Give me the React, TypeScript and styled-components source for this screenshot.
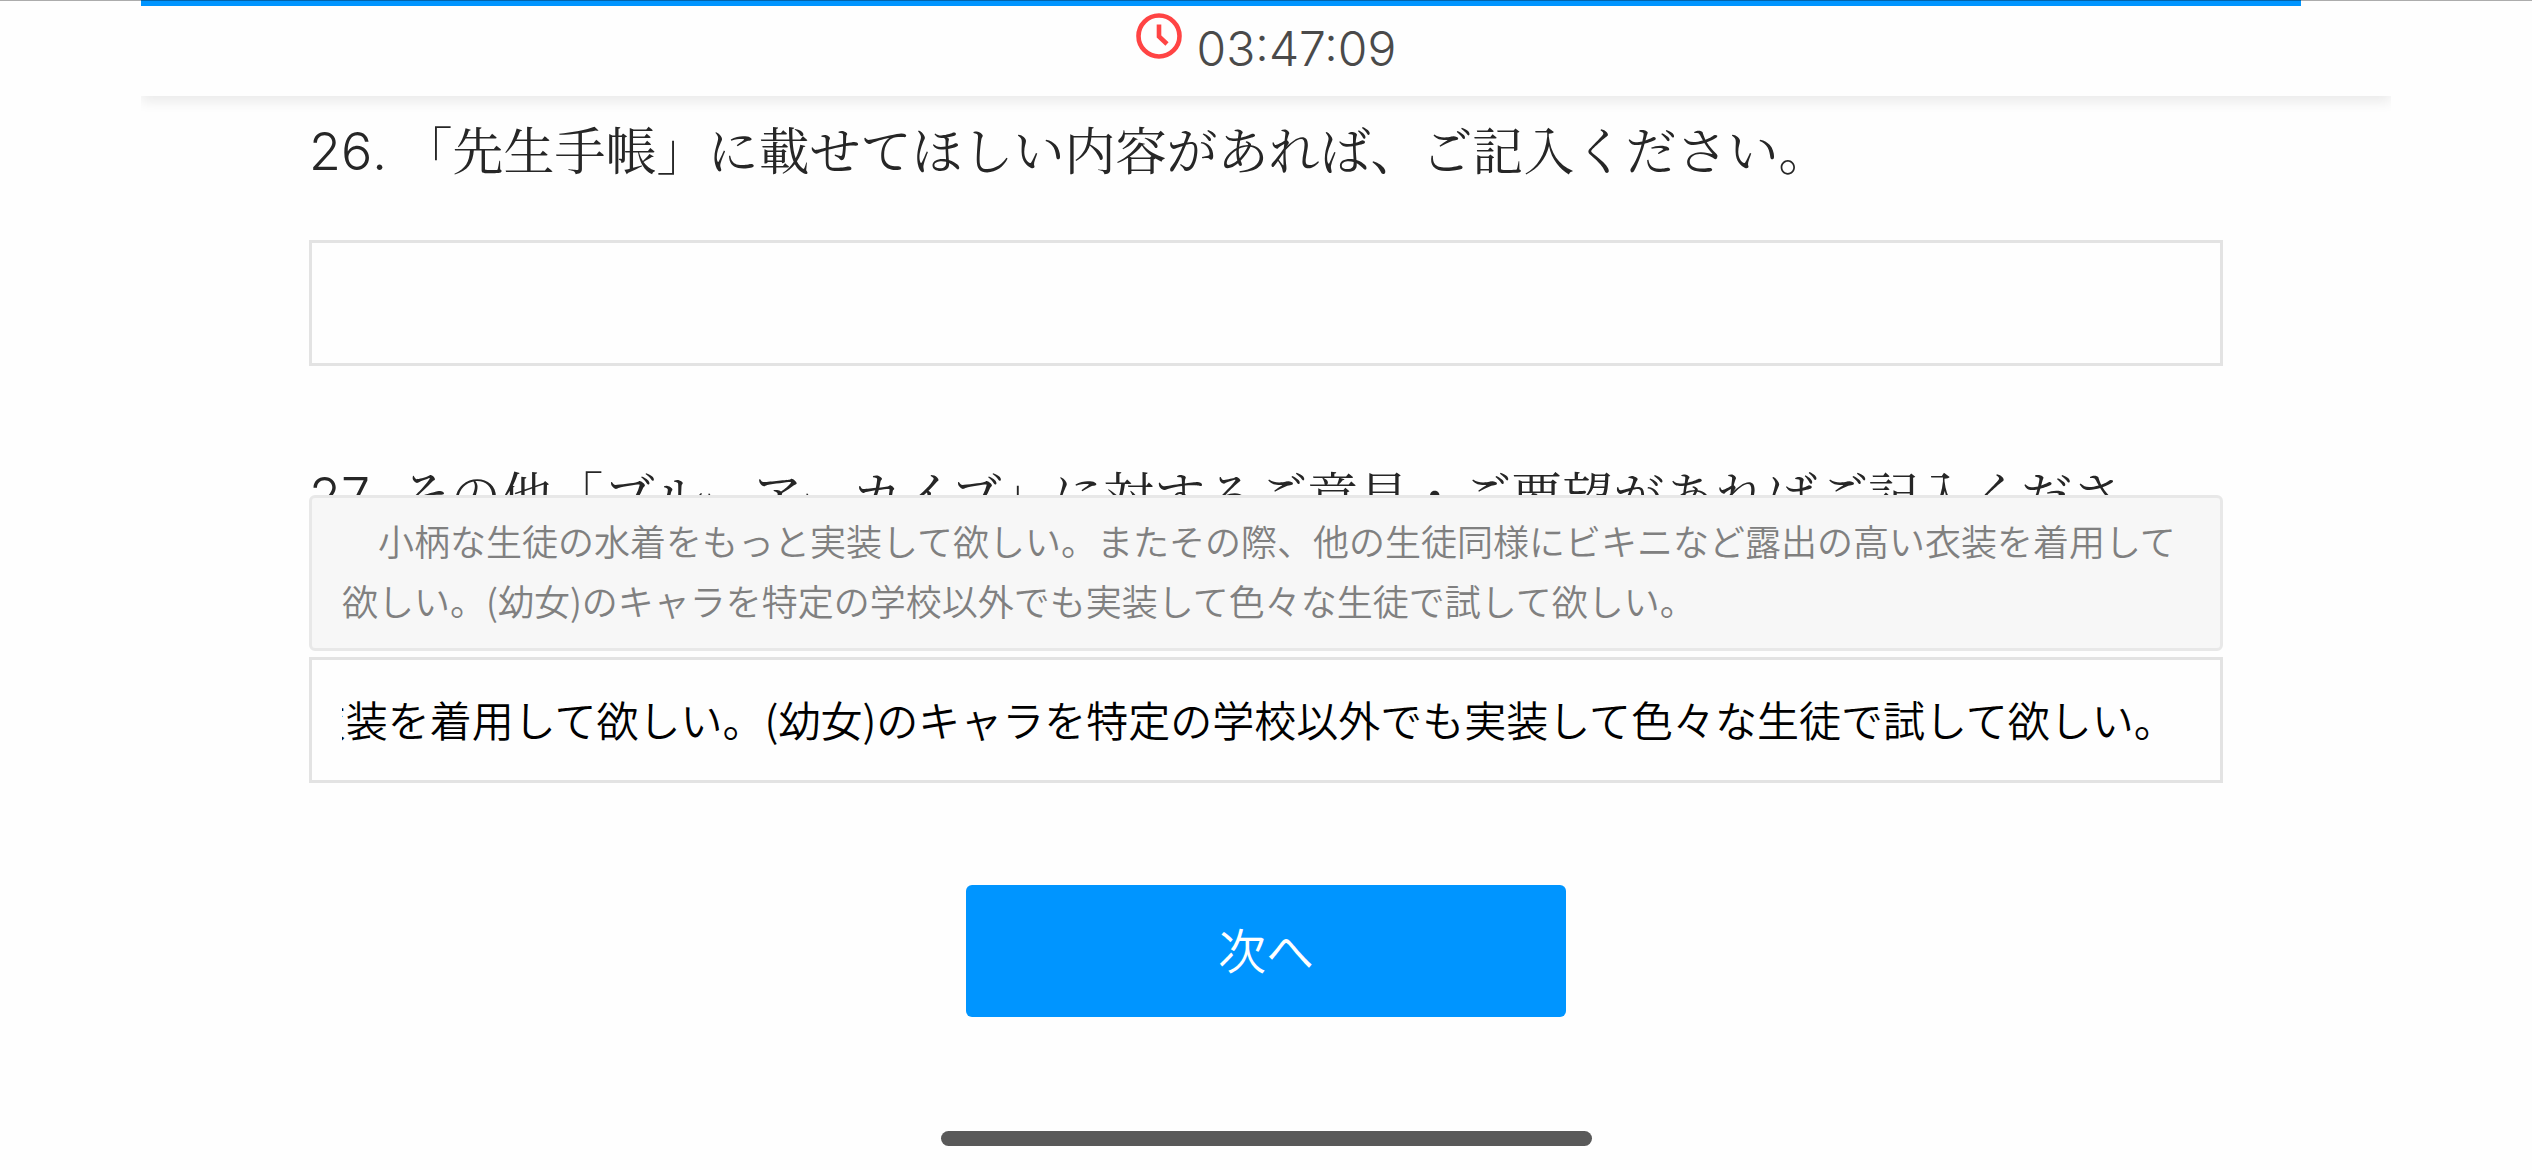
import React, { useLayoutEffect, useRef } from 'react';
import styled, { createGlobalStyle } from 'styled-components';

const sans = `'Noto Sans CJK JP', sans-serif`;
const mincho = `Inter, 'Noto Serif CJK JP', 'Noto Sans CJK JP', serif`;

const GlobalStyle = createGlobalStyle`
  *, *::before, *::after { box-sizing: border-box; }
  body {
    margin: 0;
    background: #fefefe;
    color: #262626;
    font-family: ${sans};
    text-spacing-trim: space-all;
  }
`;

const Page = styled.div`
  position: relative;
  display: flex;
  flex-direction: column;
  min-height: 100vh;
  padding: 0 141px;
`;

const ScreenEdge = styled.div`
  position: absolute;
  top: 0;
  left: 0;
  right: 0;
  height: 1px;
  background: rgba(0, 0, 0, 0.32);
`;

const Header = styled.header`
  height: 96px;
  background: #fefefe;
  box-shadow: 0 6px 12px rgba(0, 0, 0, 0.08);
  clip-path: inset(0 0 -24px 0);
`;

const Progress = styled.div`
  height: 6px;
`;

const ProgressFill = styled.div`
  height: 100%;
  background: #0095ff;
`;

const Timer = styled.div`
  display: flex;
  justify-content: center;
  align-items: flex-start;
  gap: 15px;
  padding-top: 7px;
`;

const ClockIcon = styled.svg`
  width: 46px;
  height: 46px;
`;

const TimeText = styled.time`
  font-family: Inter, ${sans};
  font-size: 48px;
  font-weight: 300;
  line-height: 72px;
  color: #4a4a4a;
`;

const Form = styled.form`
  display: flex;
  flex-direction: column;
  gap: 95px;
  padding: 20px 168px 0;
`;

const Question = styled.div`
  display: flex;
  flex-direction: column;
  gap: 52px;
`;

const QuestionLabel = styled.label`
  padding-right: 24px;
  font-family: ${mincho};
  font-size: 51px;
  line-height: 72px;
`;

const QuestionNumber = styled.span`
  font-size: 52px;
  font-weight: 350;
  font-kerning: none;
`;

const Field = styled.div`
  position: relative;
  display: flex;
`;

const TextInput = styled.input`
  flex: 1;
  min-width: 0;
  height: 126px;
  padding: 0 44px 4px 30px;
  border: 3px solid #e3e3e3;
  border-radius: 0;
  outline: none;
  background: #fefefe;
  color: #000000;
  font-family: ${sans};
  font-size: 42px;
  font-weight: 350;
`;

const FullTextBubble = styled.div`
  position: absolute;
  left: 0;
  right: 0;
  bottom: calc(100% + 6px);
  padding: 12px 30px 18px;
  border: 3px solid #e8e8e8;
  border-radius: 6px;
  background: #f7f7f7;
  color: #808080;
  font-size: 36px;
  font-weight: 350;
  line-height: 60px;
`;

const NextButton = styled.button`
  align-self: center;
  width: 600px;
  height: 132px;
  margin-top: 7px;
  padding: 0 0 6px;
  border: 0;
  border-radius: 6px;
  background: #0095ff;
  color: #ffffff;
  font-family: ${sans};
  font-size: 48px;
  font-weight: 350;
`;

const HomeIndicator = styled.div`
  align-self: center;
  width: 651px;
  height: 15px;
  margin: auto 0 24px;
  border-radius: 8px;
  background: #595959;
`;

const answer =
  '\u3000小柄な生徒の水着をもっと実装して欲しい。またその際、他の生徒同様にビキニなど露出の高い衣装を着用して欲しい。(幼女)のキャラを特定の学校以外でも実装して色々な生徒で試して欲しい。';

type AnswerFieldProps = {
  number: number;
  label: string;
  value?: string;
};

function AnswerField({ number, label, value = '' }: AnswerFieldProps) {
  const inputRef = useRef<HTMLInputElement>(null);
  const id = `question-${number}`;

  // Keep the end of a long answer in view.
  useLayoutEffect(() => {
    const input = inputRef.current;
    if (!input) return;
    const showEnd = () => {
      input.scrollLeft = input.scrollWidth;
    };
    showEnd();
    document.fonts.ready.then(showEnd);
  }, [value]);

  return (
    <Question>
      <QuestionLabel htmlFor={id}>
        <QuestionNumber>{`${number}. `}</QuestionNumber>
        {label}
      </QuestionLabel>
      <Field>
        {value && <FullTextBubble>{value}</FullTextBubble>}
        <TextInput id={id} ref={inputRef} type="text" defaultValue={value} />
      </Field>
    </Question>
  );
}

export default function App() {
  const progress = 96;
  return (
    <Page>
      <GlobalStyle />
      <Header>
        <Progress>
          <ProgressFill style={{ width: `${progress}%` }} />
        </Progress>
        <Timer>
          <ClockIcon viewBox="0 0 46 46" fill="none" stroke="#ff4444" aria-hidden="true">
            <circle cx="23" cy="23" r="20.5" strokeWidth="4.6" />
            <path d="M23 11.5V23.5L31 31" strokeWidth="4.6" />
          </ClockIcon>
          <TimeText>03:47:09</TimeText>
        </Timer>
      </Header>
      <Form onSubmit={(event) => event.preventDefault()}>
        <AnswerField
          number={26}
          label="「先生手帳」に載せてほしい内容があれば、ご記入ください。"
        />
        <AnswerField
          number={27}
          label="その他「ブルーアーカイブ」に対するご意見・ご要望があればご記入ください。"
          value={answer}
        />
        <NextButton type="submit">次へ</NextButton>
      </Form>
      <HomeIndicator />
      <ScreenEdge />
    </Page>
  );
}
